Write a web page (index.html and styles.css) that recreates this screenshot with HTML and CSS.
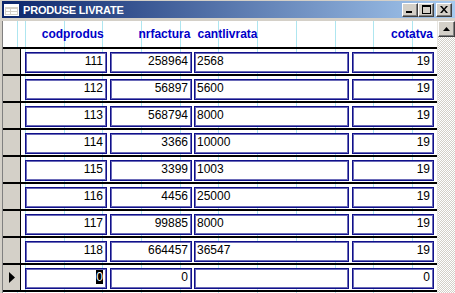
FILE: index.html
```html
<!DOCTYPE html>
<html lang="ro">

<head>
    <meta charset="UTF-8">
    <title>PRODUSE LIVRATE</title>
    <link rel="stylesheet" href="styles.css">
</head>

<body>

    <div class="window">
        <div class="titlebar">
            <svg class="form-icon" width="15" height="12" viewBox="0 0 15 12">
                <rect x="0.5" y="0.5" width="14" height="11" fill="#d4d0c8" stroke="#ffffff"/>
                <rect x="1" y="1" width="13" height="2" fill="#ffffff"/>
                <rect x="2" y="5" width="4" height="2" fill="#ffffff"/>
                <rect x="7" y="5" width="6" height="2" fill="#ffffff"/>
                <rect x="2" y="8" width="4" height="2" fill="#ffffff"/>
                <rect x="7" y="8" width="6" height="2" fill="#ffffff"/>
            </svg>
            <span class="title">PRODUSE LIVRATE</span>
            <div class="caption-buttons">
                <div class="cap-btn">
                    <svg width="8" height="7" viewBox="0 0 8 7"><rect x="0" y="5" width="6" height="2" fill="#000"/></svg>
                </div>
                <div class="cap-btn">
                    <svg width="9" height="9" viewBox="0 0 9 9"><rect x="0.5" y="0.5" width="8" height="8" fill="none" stroke="#000"/><rect x="0" y="0" width="9" height="2" fill="#000"/></svg>
                </div>
                <div class="cap-btn close">
                    <svg width="8" height="7" viewBox="0 0 8 7"><path d="M0 0h2l2 2.5 2-2.5h2l-3 3.5 3 3.5h-2l-2-2.5-2 2.5h-2l3-3.5z" fill="#000"/></svg>
                </div>
            </div>
        </div>

        <div class="client">
            <div class="form">
                <div class="header">
                    <div class="hcell c1 right">codprodus</div>
                    <div class="hcell c2 right">nrfactura</div>
                    <div class="hcell c3">cantlivrata</div>
                    <div class="hcell c4 right">cotatva</div>
                </div>

                <div class="row">
                    <div class="selector"></div>
                    <div class="box c1 right">111</div>
                    <div class="box c2 right">258964</div>
                    <div class="box c3">2568</div>
                    <div class="box c4 right">19</div>
                </div>
                <div class="row">
                    <div class="selector"></div>
                    <div class="box c1 right">112</div>
                    <div class="box c2 right">56897</div>
                    <div class="box c3">5600</div>
                    <div class="box c4 right">19</div>
                </div>
                <div class="row">
                    <div class="selector"></div>
                    <div class="box c1 right">113</div>
                    <div class="box c2 right">568794</div>
                    <div class="box c3">8000</div>
                    <div class="box c4 right">19</div>
                </div>
                <div class="row">
                    <div class="selector"></div>
                    <div class="box c1 right">114</div>
                    <div class="box c2 right">3366</div>
                    <div class="box c3">10000</div>
                    <div class="box c4 right">19</div>
                </div>
                <div class="row">
                    <div class="selector"></div>
                    <div class="box c1 right">115</div>
                    <div class="box c2 right">3399</div>
                    <div class="box c3">1003</div>
                    <div class="box c4 right">19</div>
                </div>
                <div class="row">
                    <div class="selector"></div>
                    <div class="box c1 right">116</div>
                    <div class="box c2 right">4456</div>
                    <div class="box c3">25000</div>
                    <div class="box c4 right">19</div>
                </div>
                <div class="row">
                    <div class="selector"></div>
                    <div class="box c1 right">117</div>
                    <div class="box c2 right">99885</div>
                    <div class="box c3">8000</div>
                    <div class="box c4 right">19</div>
                </div>
                <div class="row">
                    <div class="selector"></div>
                    <div class="box c1 right">118</div>
                    <div class="box c2 right">664457</div>
                    <div class="box c3">36547</div>
                    <div class="box c4 right">19</div>
                </div>
                <div class="row">
                    <div class="selector current">
                        <svg width="6" height="11" viewBox="0 0 6 11"><path d="M0 0l6 5.5-6 5.5z" fill="#000"/></svg>
                    </div>
                    <div class="box c1 right"><span class="selected">0</span></div>
                    <div class="box c2 right">0</div>
                    <div class="box c3"></div>
                    <div class="box c4 right">0</div>
                </div>
                <div class="row last"></div>
            </div>

            <div class="scrollbar">
                <div class="scroll-up">
                    <svg width="7" height="4" viewBox="0 0 7 4"><path d="M3.5 0l3.5 4h-7z" fill="#000"/></svg>
                </div>
                <div class="track"></div>
            </div>
        </div>
    </div>

</body>

</html>
```

FILE: styles.css
```css
body {
    margin: 0;
    width: 455px;
    height: 293px;
    overflow: hidden;
    background-color: #d4d0c8;
    font-family: "Liberation Sans", Arial, sans-serif;
}

.window {
    padding: 1px 0 0 2px;
    width: 453px;
}

.titlebar {
    display: flex;
    align-items: center;
    height: 17px;
    background: linear-gradient(to right, #0a246a, #a6caf0);
    color: #ffffff;
}

.form-icon {
    margin: 0 4px 0 2px;
}

.title {
    font-size: 11px;
    font-weight: bold;
    letter-spacing: -0.2px;
}

.caption-buttons {
    display: flex;
    margin-left: auto;
    margin-right: 3px;
}

.cap-btn {
    display: flex;
    align-items: center;
    justify-content: center;
    width: 14px;
    height: 12px;
    background-color: #d4d0c8;
    border-top: 1px solid #ffffff;
    border-left: 1px solid #ffffff;
    border-right: 1px solid #404040;
    border-bottom: 1px solid #404040;
    box-shadow: inset -1px -1px 0 #808080;
}

.cap-btn.close {
    margin-left: 2px;
}

.client {
    display: flex;
    margin-top: 3px;
    border-left: 1px solid #808080;
    height: 272px;
}

.form {
    width: 434px;
    background-color: #ffffff;
    background-image: repeating-linear-gradient(90deg, #aee6f0 0, #aee6f0 1px, transparent 1px, transparent 38.7px);
    background-position: 22px 0;
}

.header {
    display: flex;
    height: 26px;
    padding-left: 21px;
    color: #0000c8;
    font-size: 12px;
    font-weight: bold;
    line-height: 16px;
}

.hcell {
    padding: 5px 4px 0 1px;
}

.c1 {
    width: 82px;
}

.c2 {
    width: 82px;
    margin-left: 3px;
}

.c3 {
    width: 155px;
    margin-left: 2px;
}

.c4 {
    width: 82px;
    margin-left: 3px;
}

.right {
    text-align: right;
}

.row {
    display: flex;
    height: 25px;
    border-top: 2px solid #000000;
}

.selector {
    display: flex;
    align-items: center;
    justify-content: center;
    width: 17px;
    margin-right: 4px;
    background-color: #d4d0c8;
    border-right: 1px solid #000000;
}

.box {
    box-sizing: border-box;
    height: 21px;
    margin-top: 3px;
    border: 1px solid #10108a;
    box-shadow: inset 0 0 0 1px #6a6ab8;
    background-color: #ffffff;
    padding: 0 3px 0 2px;
    font-size: 12px;
    line-height: 17px;
    color: #000000;
}

.box.c1 {
    width: 82px;
}

.box.c2 {
    width: 82px;
}

.box.c3 {
    width: 155px;
}

.box.c4 {
    width: 82px;
}

.selected {
    background-color: #000000;
    color: #ffffff;
}

.scrollbar {
    display: flex;
    flex-direction: column;
    width: 17px;
    border-left: 1px solid #e8e6e0;
}

.scroll-up {
    display: flex;
    align-items: center;
    justify-content: center;
    height: 14px;
    background-color: #d4d0c8;
    border-top: 1px solid #ffffff;
    border-left: 1px solid #ffffff;
    border-right: 1px solid #404040;
    border-bottom: 1px solid #404040;
    box-shadow: inset -1px -1px 0 #808080;
}

.track {
    flex: 1;
    background-color: #e6e4df;
    background-image: repeating-conic-gradient(#ffffff 0 25%, #d4d0c8 0 50%);
    background-size: 2px 2px;
}
```
